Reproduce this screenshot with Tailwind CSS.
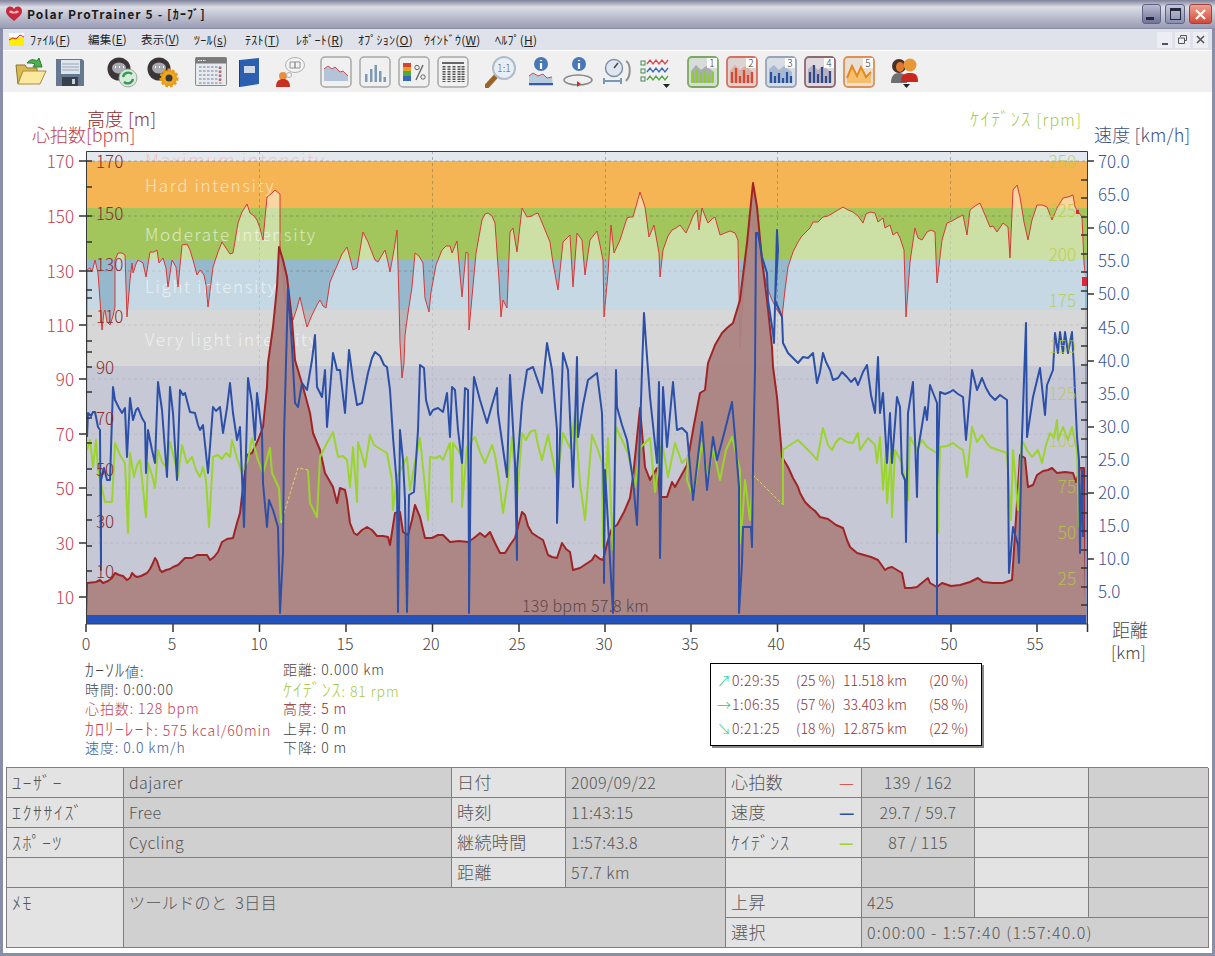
<!DOCTYPE html>
<html lang="ja"><head><meta charset="utf-8"><title>Polar ProTrainer 5</title>
<script src="https://cdn.jsdelivr.net/npm/@tailwindcss/browser@4"></script></head>
<body class="m-0 bg-white">
<div class="w-[1215px] h-[956px] flex flex-col overflow-hidden font-['Noto_Sans_CJK_JP','Noto_Sans',sans-serif] font-light bg-white">
<!-- title bar -->
<div class="h-[29px] shrink-0 flex items-center bg-gradient-to-b from-[#7f8299] via-[#dcdde6] via-25% to-[#9a9cb4] border-b border-[#8a8da6] pl-[6px] pr-[3px]">
<svg class="w-[16px] h-[16px]" viewBox="0 0 16 16"><path d="M8 15C2 10 0 8 0 5c0-5 6-6 8-2 2-4 8-3 8 2 0 3-2 5-8 10z" fill="#c8283c"/><path d="M3 6c1-2 3-2 5 0 2-2 4-2 5 0-2 2-8 2-10 0z" fill="#f8b0b8"/></svg>
<span class="ml-[5px] text-[12px] font-bold text-[#1a1a1a] tracking-[1.15px] leading-none">Polar ProTrainer 5 - [ｶｰﾌﾞ]</span>
<div class="ml-auto flex gap-[4px]">
<div class="w-[19px] h-[20px] rounded-[3px] border border-[#5f6386] bg-gradient-to-b from-[#b9bcd0] to-[#6f7396] flex items-end p-[3px]"><div class="w-[8px] h-[3px] bg-[#26283c]"></div></div>
<div class="w-[20px] h-[20px] rounded-[3px] border border-[#5f6386] bg-gradient-to-b from-[#c5c8da] to-[#8a8eae] flex items-center justify-center"><div class="w-[11px] h-[12px] border border-[#26283c] border-t-[3px]"></div></div>
<div class="w-[23px] h-[20px] rounded-[3px] border border-[#a04040] bg-gradient-to-b from-[#f0a090] to-[#d04838] flex items-center justify-center"><svg class="w-[13px] h-[13px]" viewBox="0 0 13 13"><path d="M2 2l9 9M11 2l-9 9" stroke="#fff" stroke-width="2.2"/></svg></div>
</div></div>
<div class="flex-1 flex flex-col border-x-[3px] border-b-[3px] border-[#8a8ea8] min-h-0">
<!-- menu -->
<div class="h-[22px] shrink-0 flex items-center bg-[#dfe2ea] border-b border-white text-[12px] tracking-[.25px] font-normal text-[#222] pl-[6px]">
<svg class="w-[15px] h-[13px] mr-[6px]" viewBox="0 0 15 13"><rect width="15" height="13" fill="#fff"/><rect y="4" width="15" height="9" fill="#ffee00"/><path d="M0 7l4-2 3 1 4-4 4 2" stroke="#d03020" fill="none"/></svg>
<span class="w-[58px]">ﾌｧｲﾙ(<u>F</u>)</span><span class="w-[53px] text-[11.5px]">編集(<u>E</u>)</span><span class="w-[53px] text-[11.5px]">表示(<u>V</u>)</span><span class="w-[51px]">ﾂｰﾙ(<u>s</u>)</span><span class="w-[51px]">ﾃｽﾄ(<u>T</u>)</span><span class="w-[62px]">ﾚﾎﾟｰﾄ(<u>R</u>)</span><span class="w-[66px]">ｵﾌﾟｼｮﾝ(<u>O</u>)</span><span class="w-[71px]">ｳｲﾝﾄﾞｳ(<u>W</u>)</span><span>ﾍﾙﾌﾟ(<u>H</u>)</span>
<div class="ml-auto mr-[4px] flex gap-[3px] text-[#555]">
<div class="w-[15px] h-[16px] bg-[#eceef3] flex items-end justify-center pb-[3px]"><div class="w-[6px] h-[2px] bg-[#555]"></div></div>
<div class="w-[15px] h-[16px] bg-[#eceef3] flex items-center justify-center"><svg class="w-[9px] h-[9px]" viewBox="0 0 9 9"><path d="M2.5 2V.5h6v5H7M.5 3h6v5.5h-6z" stroke="#555" fill="none"/></svg></div>
<div class="w-[15px] h-[16px] bg-[#eceef3] flex items-center justify-center"><svg class="w-[9px] h-[9px]" viewBox="0 0 9 9"><path d="M1 1l7 7M8 1l-7 7" stroke="#555" stroke-width="1.6"/></svg></div>
</div></div>
<!-- toolbar -->
<div class="h-[41px] shrink-0 flex items-center bg-[#f0f0f0] pl-[12px]">
<svg class="w-8 h-8" viewBox="0 0 32 32"><path d="M3 28L1 9h9l2 3h10v4H8z" fill="#d8b850" stroke="#8a7430"/><path d="M3 28l5-13h23l-6 13z" fill="#fbe9a0" stroke="#a88c40"/><path d="M12 7c3-4 7-4 10-2l2-3 3 9-9 0 2-3c-2-1-5-1-8-1z" fill="#4caf50" stroke="#2e7d32"/></svg>
<svg class="w-8 h-8 ml-[7px]" viewBox="0 0 32 32"><path d="M2 3h26l2 2v25H2z" fill="#66788f"/><rect x="7" y="4" width="19" height="14" fill="#dfe5ec"/><path d="M8 8h17M8 11h17M8 14h17" stroke="#9aa8b8"/><rect x="8" y="21" width="16" height="9" fill="#39404d"/><rect x="18" y="23" width="3" height="5" fill="#c9d0da"/></svg>
<svg class="w-8 h-8 ml-[20px]" viewBox="0 0 32 32"><circle cx="13" cy="13" r="11.5" fill="#3c3538"/><ellipse cx="13" cy="12" rx="7" ry="5.5" fill="#a8aab2"/><path d="M9 11h1M13 11h1M17 11h1" stroke="#fff" stroke-width="2"/><circle cx="22" cy="22" r="9" fill="#d8ead8" stroke="#a0a8a0"/><path d="M17 21a5.500 5.500 0 0 1 9-3M27 23a5.500 5.500 0 0 1-9 3" stroke="#2e9a58" stroke-width="2.400" fill="none"/></svg>
<svg class="w-8 h-8 ml-[9px]" viewBox="0 0 32 32"><circle cx="12" cy="13" r="11.500" fill="#3c3538"/><ellipse cx="12" cy="12" rx="7" ry="5.500" fill="#a8aab2"/><path d="M8 11h1M12 11h1M16 11h1" stroke="#fff" stroke-width="2"/><circle cx="22" cy="22" r="8" fill="#e89a18" stroke="#e89a18" stroke-width="3" stroke-dasharray="2.500 2"/><circle cx="22" cy="22" r="6.500" fill="#f0a820"/><circle cx="22" cy="22" r="3.500" fill="#3a3a3a"/></svg>
<svg class="w-8 h-8 ml-[16px]" viewBox="0 0 32 32"><rect x="0.500" y="1.500" width="31" height="28" rx="1" fill="#e8eaee" stroke="#8a8a8a"/><rect x="0.500" y="1.500" width="31" height="6" fill="#7a7a7a"/><path d="M3 4.500h8" stroke="#fff" stroke-dasharray="1.500 1"/><path d="M4 11h24M4 15h24M4 19h24M4 23h24M4 27h24" stroke="#a8b4c8" stroke-width="2" stroke-dasharray="2.500 1.500"/><path d="M25 11v16" stroke="#d06060" stroke-width="2.500" stroke-dasharray="2 2"/></svg>
<svg class="w-8 h-8 ml-[7px]" viewBox="0 0 32 32"><path d="M6 4l19-2v26L6 31z" fill="#2d5fb0"/><path d="M6 4h-1v27h1z" fill="#1c3f80"/><rect x="10" y="10" width="11" height="7" fill="#cdd8e8"/></svg>
<svg class="w-8 h-8 ml-[8px]" viewBox="0 0 32 32"><circle cx="9" cy="20" r="4" fill="#e89040"/><path d="M2 31c0-6 3-8 7-8s7 2 7 8z" fill="#c83020"/><ellipse cx="21" cy="9" rx="9.500" ry="7.500" fill="#f4f4f4" stroke="#b0b0b0"/><circle cx="15" cy="19" r="2.500" fill="#f4f4f4" stroke="#b0b0b0"/><path d="M16 6h5v6h-5zM21 6h5v6h-5z" fill="none" stroke="#909090"/></svg>
<svg class="w-8 h-8 ml-[14px]" viewBox="0 0 32 32"><rect x="1" y="1" width="30" height="30" rx="4" fill="#f0f0f0" stroke="#a8a8a8" stroke-width="1.500"/><path d="M4 25V13l4-3 4 3 3-2 5 5 3-1 5 5v5z" fill="#b4c4d8"/><path d="M4 13l4-3 4 3 3-2 5 5 3-1 5 5" stroke="#d84850" fill="none"/></svg>
<svg class="w-8 h-8 ml-[7px]" viewBox="0 0 32 32"><rect x="1" y="1" width="30" height="30" rx="4" fill="#f0f0f0" stroke="#a8a8a8" stroke-width="1.500"/><path d="M6 26V18h2.500v8zM11 26V13h2.500v13zM15.500 26V9h2.500v17zM20 26V15h2.500v11zM24.500 26V21h2.500v5z" fill="#7c9ab4"/></svg>
<svg class="w-8 h-8 ml-[7px]" viewBox="0 0 32 32"><rect x="1" y="1" width="30" height="30" rx="4" fill="#f0f0f0" stroke="#a8a8a8" stroke-width="1.500"/><rect x="5" y="7" width="8" height="4" fill="#d84030"/><rect x="5" y="11" width="8" height="4" fill="#e8a020"/><rect x="5" y="15" width="8" height="5" fill="#50a840"/><rect x="5" y="20" width="8" height="5" fill="#3868b8"/><path d="M25 9l-7 15" stroke="#666" stroke-width="1.400"/><circle cx="19" cy="11.500" r="2.200" fill="none" stroke="#666"/><circle cx="25" cy="21" r="2.200" fill="none" stroke="#666"/></svg>
<svg class="w-8 h-8 ml-[7px]" viewBox="0 0 32 32"><rect x="1" y="1" width="30" height="30" rx="4" fill="#f0f0f0" stroke="#a8a8a8" stroke-width="1.500"/><path d="M5 7h22" stroke="#666" stroke-width="2"/><path d="M7 10v16M12 10v16M17 10v16M22 10v16M26 10v16" stroke="#555" stroke-width="3" stroke-dasharray="1.500 1"/></svg>
<svg class="w-8 h-8 ml-[16px]" viewBox="0 0 32 32"><path d="M2 30l10-11" stroke="#9a6428" stroke-width="5" stroke-linecap="round"/><circle cx="19" cy="12" r="11" fill="#e8eef6" stroke="#b0bcc8" stroke-width="2"/><text x="19" y="16" text-anchor="middle" class="text-[10.500px] fill-[#666]">1:1</text></svg>
<svg class="w-8 h-8 ml-[7px]" viewBox="0 0 32 32"><circle cx="17" cy="8" r="7" fill="#4878b8"/><path d="M17 4v1M17 7v6" stroke="#fff" stroke-width="2.200"/><path d="M5 30V20l4-3 5 3 5-2 4 4 5-1 1 9z" fill="#b8cce0"/><path d="M5 20l4-3 5 3 5-2 4 4 5-1" stroke="#d84850" fill="none"/><rect x="5" y="27" width="24" height="2" fill="#3858a8"/></svg>
<svg class="w-8 h-8 ml-[6px]" viewBox="0 0 32 32"><circle cx="17" cy="8" r="7" fill="#4878b8"/><path d="M17 4v1M17 7v6" stroke="#fff" stroke-width="2.200"/><ellipse cx="16" cy="24" rx="14" ry="5" fill="none" stroke="#888" stroke-width="1.500"/><path d="M15 25v6l4-3z" fill="#c83020"/></svg>
<svg class="w-8 h-8 ml-[7px]" viewBox="0 0 32 32"><circle cx="13" cy="12" r="8.500" fill="#dfe6f0" stroke="#8090a8" stroke-width="1.500"/><path d="M13 12l4-5" stroke="#445" stroke-width="1.500"/><path d="M3 25h17M3 22v6M20 22v6" stroke="#7898b8" stroke-width="2"/><path d="M25 5c5 3 5 15 0 20" stroke="#909090" stroke-width="2" fill="none"/></svg>
<svg class="w-8 h-8 ml-[7px]" viewBox="0 0 32 32"><rect x="1" y="5" width="4" height="4" fill="none" stroke="#4a8a50"/><rect x="1" y="13" width="4" height="4" fill="none" stroke="#4a8a50"/><rect x="1" y="21" width="4" height="4" fill="none" stroke="#4a8a50"/><path d="M7 8l3-4 3 4 3-4 3 4 3-4 3 4 3-4" stroke="#d84850" fill="none" stroke-width="1.300"/><path d="M7 16l3-4 3 4 3-4 3 4 3-4 3 4 3-4" stroke="#3868b8" fill="none" stroke-width="1.300"/><path d="M7 24l3-4 3 4 3-4 3 4 3-4 3 4 3-4" stroke="#50a840" fill="none" stroke-width="1.300"/><path d="M23 28h7l-3.500 4z" fill="#222"/></svg>
<svg class="w-8 h-8 ml-[15px]" viewBox="0 0 32 32"><rect x="1" y="1" width="30" height="30" rx="4" fill="#d8dcd8" stroke="#7aaa60" stroke-width="1.800"/><path d="M4 27V15l5-6 5 5 5-4 8 6v11z" fill="#a8aeb0"/><path d="M6 27V16M10 27V14M14 27V17M18 27V15M22 27V18M26 27V16" stroke="#8ad028" stroke-width="2"/><rect x="20" y="2" width="10" height="10" fill="#fff"/><text x="25" y="11" text-anchor="middle" class="text-[10px] fill-[#333]">1</text></svg>
<svg class="w-8 h-8 ml-[7px]" viewBox="0 0 32 32"><rect x="1" y="1" width="30" height="30" rx="4" fill="#dcd4d0" stroke="#d87060" stroke-width="1.800"/><path d="M4 27V15l5-6 5 5 5-4 8 6v11z" fill="#d8b0a8"/><path d="M6 27V16M10 27V12M14 27V20M18 27V14M22 27V19M26 27V16" stroke="#d84830" stroke-width="2.200"/><rect x="20" y="2" width="10" height="10" fill="#fff"/><text x="25" y="11" text-anchor="middle" class="text-[10px] fill-[#333]">2</text></svg>
<svg class="w-8 h-8 ml-[7px]" viewBox="0 0 32 32"><rect x="1" y="1" width="30" height="30" rx="4" fill="#d8dce4" stroke="#98a4b8" stroke-width="1.800"/><path d="M4 27V13l5-4 5 5 5-4 8 6v11z" fill="#a8b8d0"/><path d="M6 27V16M10 27V20M14 27V17M18 27V22M22 27V16M26 27V20" stroke="#2850a0" stroke-width="2.200"/><rect x="20" y="2" width="10" height="10" fill="#fff"/><text x="25" y="11" text-anchor="middle" class="text-[10px] fill-[#333]">3</text></svg>
<svg class="w-8 h-8 ml-[7px]" viewBox="0 0 32 32"><rect x="1" y="1" width="30" height="30" rx="4" fill="#dcd8dc" stroke="#906870" stroke-width="1.800"/><path d="M4 27V13l5-4 5 5 5-4 8 6v11z" fill="#b8b0c0"/><path d="M6 27V16M10 27V9M14 27V18M18 27V11M22 27V20M26 27V15" stroke="#304a88" stroke-width="2.200"/><rect x="20" y="2" width="10" height="10" fill="#fff"/><text x="25" y="11" text-anchor="middle" class="text-[10px] fill-[#333]">4</text></svg>
<svg class="w-8 h-8 ml-[7px]" viewBox="0 0 32 32"><rect x="1" y="1" width="30" height="30" rx="4" fill="#e8e0d8" stroke="#e09050" stroke-width="1.800"/><path d="M4 27V22L9 10l5 10 4-9 5 10 5-5v11z" fill="#f4c070"/><path d="M4 22L9 10l5 10 4-9 5 10 5-5" stroke="#e88818" fill="none" stroke-width="2"/><rect x="20" y="2" width="10" height="10" fill="#fff"/><text x="25" y="11" text-anchor="middle" class="text-[10px] fill-[#333]">5</text></svg>
<svg class="w-8 h-8 ml-[14px]" viewBox="0 0 32 32"><circle cx="10" cy="10" r="7" fill="#4a3028"/><ellipse cx="11" cy="11" rx="4" ry="5" fill="#e07830"/><path d="M2 27c0-7 3-10 8-10s8 3 8 10z" fill="#707070"/><circle cx="21" cy="9" r="6.500" fill="#e89838"/><path d="M12 26c0-7 3-9 9-9s8 2 8 9z" fill="#c82820"/><path d="M14 28h7l-3.500 4z" fill="#222"/></svg>
</div>
<!-- chart: a free canvas whose coordinates are window pixels -->
<svg class="block w-[1209px] h-[568px] shrink-0 overflow-visible" viewBox="3 92 1209 568">
<defs><clipPath id="plot"><rect x="87" y="151" width="998" height="465"/></clipPath></defs>
<rect x="86" y="151" width="1002" height="10" fill="#e3e8ee"/>
<text x="145" y="167" class="text-[18px] fill-[#f4c4c4] tracking-[1.6px]">Maximum intensity</text>
<rect x="86" y="161" width="1002" height="47" fill="#f5b554"/>
<rect x="86" y="208" width="1002" height="51" fill="#a2c65c"/>
<rect x="86" y="259" width="1002" height="51" fill="#95b8cd"/>
<rect x="86" y="310" width="1002" height="56" fill="#b6b6b9"/>
<rect x="86" y="366" width="1002" height="258" fill="#979bb4"/>
<g class="text-[17px] fill-white tracking-[1.650px]" opacity=".62"><text x="145" y="192">Hard intensity</text><text x="145" y="241">Moderate intensity</text><text x="145" y="293">Light intensity</text><text x="145" y="346">Very light intensity</text></g>
<g stroke="#666" stroke-dasharray="3 3" opacity=".45" fill="none"><path d="M259.500 151V615M432.500 151V615M605.500 151V615M777.500 151V615M950.500 151V615M86 161H1088M86 216H1088M86 271H1088M86 325H1088M86 379H1088M86 434H1088M86 488H1088M86 543H1088"/></g>
<g clip-path="url(#plot)">
<polyline fill="#ffffff" fill-opacity=".45" stroke="#d63838" stroke-width="1" stroke-linejoin="round" points="86,624 87,270 90,268 92,272 95,260 98,273 100,300 102,330 104,312 105,310 107,322 110,325 113,316 115,307 115,260 118,253 122,253 125,255 127,317 130,280 132,263 133,273 136,264 138,260 143,263 146,277 150,252 154,252 157,250 159,263 163,258 166,268 168,287 172,260 176,267 178,287 182,245 187,244 190,250 193,260 197,275 200,270 204,275 206,285 208,307 213,267 218,252 222,242 226,248 230,254 233,253 238,223 242,212 247,204 250,213 254,216 257,220 260,228 263,240 267,197 271,194 275,190 280,194 280,247 285,300 293,320 297,308 300,297 304,315 307,327 312,315 317,305 320,300 323,306 326,308 330,282 336,268 342,254 347,247 350,258 353,270 357,268 363,232 368,242 373,255 375,260 378,262 382,255 385,250 388,262 390,272 394,250 397,230 399,300 400,343 402,378 404,363 405,335 408,313 412,287 415,253 419,256 423,263 425,298 429,312 431,292 436,265 442,250 446,246 450,246 452,253 457,241 462,297 466,252 468,253 469,330 476,253 482,220 485,214 488,213 492,216 495,223 499,280 501,317 503,300 505,304 507,308 510,232 513,228 517,252 522,208 527,217 532,216 535,214 538,213 543,225 550,242 553,263 558,290 563,242 570,235 573,287 577,233 582,240 585,275 590,240 597,231 600,245 603,260 604,317 608,273 611,225 614,253 620,240 627,218 630,217 633,217 640,192 645,207 649,237 654,225 659,253 660,277 663,250 668,236 672,230 676,228 680,225 686,233 690,224 693,216 697,210 699,230 702,208 705,216 708,223 712,219 715,217 720,235 725,233 730,231 735,233 738,240 740,347 744,280 750,225 753,225 760,258 767,287 772,300 777,310 782,317 785,290 788,267 793,252 798,242 802,236 806,232 810,228 813,222 818,222 823,217 828,216 833,213 838,210 843,207 848,210 853,212 858,216 863,223 866,214 870,212 875,213 878,222 883,218 885,228 890,225 893,235 897,232 900,238 904,250 906,317 910,262 915,228 918,238 922,240 927,232 931,230 935,232 937,283 942,240 947,223 952,221 957,218 963,215 967,235 970,210 975,206 980,203 985,215 990,227 993,226 997,232 1003,223 1008,227 1010,258 1013,190 1017,185 1020,197 1024,222 1028,240 1032,220 1037,205 1042,205 1047,207 1052,220 1057,208 1063,198 1068,197 1073,195 1075,207 1082,217 1084,263 1086,280 1086,624"/>
<polyline fill="#ab8280" fill-opacity=".93" stroke="#a02424" stroke-width="2" stroke-linejoin="round" points="86,615 87,583 96,582 100,580 103,583 108,581 112,578 115,573 119,575 123,576 127,580 130,578 132,573 135,576 137,577 141,576 147,573 150,569 153,563 155,558 157,561 160,570 162,572 166,570 170,569 173,567 178,565 182,561 185,558 192,558 197,555 207,555 210,560 214,557 218,552 222,542 227,539 233,538 237,523 240,513 243,487 247,455 252,453 258,440 263,427 267,387 268,363 273,327 277,287 279,247 283,260 287,277 292,320 295,360 303,387 310,413 313,433 320,450 325,473 333,487 337,503 340,488 345,490 347,500 350,523 354,533 357,535 362,530 367,527 372,530 377,536 383,536 388,537 390,545 395,513 400,512 403,532 408,535 412,520 415,505 420,517 425,538 432,538 438,535 443,535 450,542 459,541 468,542 474,538 480,533 485,537 490,532 495,543 500,553 505,553 510,545 515,538 522,512 525,515 528,526 532,533 538,537 543,540 548,555 552,557 557,558 562,543 566,549 570,552 573,570 580,568 586,564 592,560 595,555 600,559 603,560 608,540 612,528 617,525 624,512 630,498 633,477 640,408 645,467 650,480 657,468 660,497 667,497 672,482 675,487 681,476 687,465 693,430 700,393 705,390 708,363 715,345 722,333 727,328 733,323 740,300 747,243 753,183 757,207 762,260 767,300 772,347 773,367 777,397 782,457 788,467 793,478 798,487 800,493 805,502 810,507 815,511 820,517 828,519 836,525 843,528 847,540 850,547 857,553 864,555 871,557 878,560 885,570 888,568 892,567 897,570 902,573 905,588 911,588 917,587 923,582 928,578 930,583 937,587 942,583 951,586 960,585 970,582 978,578 983,582 993,583 1003,583 1012,580 1017,503 1020,455 1025,458 1028,487 1033,485 1037,475 1043,471 1048,470 1052,468 1057,473 1065,472 1073,473 1076,482 1080,468 1084,468 1086,603 1086,615"/>
<polyline fill="none" stroke="#9bd42d" stroke-width="2" stroke-linejoin="round" points="87,450 90,440 93,467 96,440 98,470 103,493 105,502 112,502 115,443 120,455 125,463 128,533 130,453 134,477 137,465 140,460 146,517 148,463 152,475 155,488 158,450 162,462 167,468 170,442 175,462 178,477 182,445 187,463 192,457 196,470 200,477 203,467 206,480 209,527 213,457 218,455 222,459 226,453 230,457 232,440 237,458 242,473 248,460 252,438 258,460 263,473 270,448 272,473 279,488 281,523"/>
<path d="M281,523 298,468 308,470M753,475 783,505" fill="none" stroke="#d8d870" stroke-width="1" stroke-dasharray="3 2"/>
<polyline fill="none" stroke="#9bd42d" stroke-width="2" stroke-linejoin="round" points="308,470 310,503 317,517 320,457 327,443 333,432 338,457 343,456 347,460 350,487 353,447 357,502 358,442 362,455 365,467 370,435 374,445 377,447 382,450 387,453 392,480 393,510 397,477 407,457 410,490 415,462 420,438 425,487 428,520 430,457 436,458 440,456 443,460 447,450 450,443 452,502 453,443 458,450 462,458 462,507 467,447 475,437 480,452 485,463 492,445 495,455 499,480 503,513 508,480 512,437 517,500 522,433 526,440 530,432 535,430 538,445 542,460 548,435 552,455 557,480 563,433 570,448 575,413 580,483 585,520 592,435 598,450 602,463 603,547 608,438 613,550 616,427 622,440 628,453 635,487 640,448 650,438 655,492 662,442 668,477 675,443 682,463 688,457 687,480 693,497 702,443 708,480 713,447 720,480 726,450 732,437 740,470 740,543 743,510 745,480 750,520 753,477"/>
<polyline fill="none" stroke="#9bd42d" stroke-width="2" stroke-linejoin="round" points="783,505 783,450 790,445 798,440 803,445 808,450 813,455 817,460 823,428 828,445 832,450 836,442 840,438 847,442 853,443 858,433 860,450 868,438 875,445 877,463 880,437 883,490 886,450 887,503 891,453 892,517 895,450 902,463 905,480 908,500 910,437 917,450 922,440 927,447 932,450 937,453 938,533 940,447 947,446 953,443 958,447 963,450 967,477 972,427 977,442 982,435 986,442 990,447 998,450 1007,453 1011,520 1013,450 1018,510 1022,440 1027,450 1032,457 1038,450 1042,463 1046,445 1050,433 1054,438 1057,420 1058,440 1063,427 1068,440 1072,427 1077,450 1079,527"/>
<polyline fill="none" stroke="#2c50a8" stroke-width="2" stroke-linejoin="round" points="87,437 88,413 91,416 93,412 95,412 98,427 100,430 101,570 101,480 104,468 107,480 110,480 113,387 115,400 119,408 122,413 125,408 127,457 130,398 133,420 136,410 138,408 142,418 145,423 146,473 148,430 152,450 155,463 158,382 162,410 165,450 167,477 170,387 173,413 177,480 180,390 183,395 185,393 190,412 195,413 198,425 200,430 203,425 208,473 213,407 216,411 220,407 223,433 227,408 230,383 233,413 237,440 240,427 244,527 248,378 252,403 255,440 257,393 262,433 263,483 267,527 269,500 273,510 278,527 280,613 283,553 284,437 288,288 292,347 295,403 298,407 302,383 307,390 312,360 315,335 317,387 322,397 325,370 327,427 333,353 337,370 340,370 345,413 349,350 353,380 357,405 362,403 368,373 372,358 375,352 380,356 384,365 387,367 390,390 393,437 397,487 398,612 400,430 403,460 405,500 407,612 409,495 414,492 418,430 420,365 424,368 426,400 430,415 433,410 438,408 443,412 447,393 450,437 452,387 455,390 458,430 462,463 465,388 468,390 469,570 469,613 471,447 474,377 480,400 487,423 492,405 497,388 498,413 507,477 510,375 515,463 517,560 517,470 522,403 527,370 533,367 542,393 547,343 552,370 557,430 557,523 563,353 568,370 573,487 577,357 578,437 583,405 588,380 597,373 602,413 604,503 604,583 605,470 613,613 616,370 617,407 622,425 627,440 633,480 637,525 642,370 644,313 646,343 650,397 657,463 659,382 660,558 663,387 667,447 673,382 677,430 682,428 687,433 693,500 702,422 707,490 713,437 717,460 725,430 732,402 735,437 739,487 739,613 742,563 743,527 747,527 751,527 752,547 753,467 755,370 756,233 758,233 762,257 767,273 768,300 773,333 774,343 777,230 778,250 775,300 782,317 783,343 788,353 793,358 798,363 803,357 808,358 813,353 815,368 817,383 820,372 823,353 826,362 830,370 833,380 838,378 842,372 847,377 851,382 855,378 858,385 863,372 867,365 871,395 875,413 878,357 880,413 883,393 887,463 890,413 892,463 897,397 900,407 902,473 905,480 906,542 908,413 913,382 917,497 918,450 925,407 927,420 930,385 937,403 937,615 937,487 940,392 945,394 950,392 953,390 958,394 963,397 966,440 972,370 977,390 982,378 986,388 990,395 995,400 1000,395 1007,400 1008,470 1009,573 1013,527 1018,545 1019,563 1022,437 1026,323 1027,437 1033,397 1040,368 1045,415 1047,385 1053,370 1055,333 1058,353 1060,332 1063,353 1065,332 1068,353 1072,332 1074,370 1077,437 1079,460 1080,553 1082,470 1083,537"/>
</g>
<rect x="1085" y="470" width="3" height="145" fill="#8494c4"/>
<rect x="1082" y="277" width="5" height="9" fill="#d8283c"/><rect x="1076" y="210" width="3" height="4" fill="#d8283c"/>
<rect x="86" y="615" width="1000" height="9" fill="#2352bd"/>
<!-- inner axis numbers -->
<g class="text-[17px] fill-[#8b2b2b]"><text x="96" y="168">170</text><text x="96" y="220">150</text><text x="96" y="271">130</text><text x="96" y="323">110</text><text x="96" y="374">90</text><text x="96" y="425">70</text><text x="96" y="476">50</text><text x="96" y="528">30</text><text x="96" y="578">10</text></g>
<g class="text-[17px] fill-[#b8cc40]" text-anchor="end" opacity=".8"><text x="1076" y="168">250</text><text x="1076" y="217">225</text><text x="1076" y="261">200</text><text x="1076" y="307">175</text><text x="1076" y="353">150</text><text x="1076" y="400">125</text><text x="1076" y="447">100</text><text x="1076" y="493">75</text><text x="1076" y="539">50</text><text x="1076" y="585">25</text></g>
<text x="522" y="612" class="text-[16px] fill-[#55464a] tracking-[.3px]">139 bpm 57.8 km</text>
<!-- frame and ticks -->
<path d="M86.500 624V151.500H1087.500V624M86 624H1088" fill="none" stroke="#3a3a3a"/>
<path d="M79 161H86M79 216H86M79 271H86M79 325H86M79 379H86M79 434H86M79 488H86M79 543H86M79 597H86" stroke="#333" stroke-width="1.500"/>
<path d="M86 161H92M86 187H92M86 216H92M86 242H92M86 271H92M86 290H92M86 298H92M86 316H92M86 341H92M86 352H92M86 367H92M86 392H92M86 418H92M86 443H92M86 469H92M86 495H92M86 520H92M86 546H92M86 571H92" stroke="#333" stroke-width="1.500"/>
<path d="M1088 161H1094M1088 228H1094M1088 294H1094M1088 361H1094M1088 427H1094M1088 493H1094M1088 559H1094" stroke="#333" stroke-width="1.500"/>
<path d="M1081 180H1088M1081 198H1088M1081 217H1088M1081 235H1088M1081 254H1088M1081 272H1088M1081 291H1088M1081 309H1088M1081 328H1088M1081 346H1088M1081 365H1088M1081 383H1088M1081 402H1088M1081 420H1088M1081 439H1088M1081 457H1088M1081 476H1088M1081 494H1088M1081 513H1088M1081 531H1088M1081 550H1088M1081 568H1088M1081 587H1088M1081 605H1088" stroke="#333" stroke-width="1.500"/>
<path d="M86 624V632M173 624V632M259.500 624V632M346 624V632M432.500 624V632M519 624V632M605 624V632M691 624V632M777.500 624V632M864 624V632M951 624V632M1037 624V632M1087.500 624V632" stroke="#333" stroke-width="1.500"/>
<!-- outer labels -->
<g class="text-[17px] fill-[#c4404e]" text-anchor="end"><text x="74" y="168">170</text><text x="74" y="223">150</text><text x="74" y="278">130</text><text x="74" y="332">110</text><text x="74" y="386">90</text><text x="74" y="441">70</text><text x="74" y="495">50</text><text x="74" y="550">30</text><text x="74" y="604">10</text></g>
<g class="text-[17px] fill-[#3c5590]"><text x="1098" y="168">70.0</text><text x="1098" y="201">65.0</text><text x="1098" y="234">60.0</text><text x="1098" y="267">55.0</text><text x="1098" y="300">50.0</text><text x="1098" y="334">45.0</text><text x="1098" y="367">40.0</text><text x="1098" y="400">35.0</text><text x="1098" y="433">30.0</text><text x="1098" y="466">25.0</text><text x="1098" y="499">20.0</text><text x="1098" y="532">15.0</text><text x="1098" y="565">10.0</text><text x="1098" y="598">5.0</text></g>
<g class="text-[16px] fill-[#444]" text-anchor="middle"><text x="86" y="650">0</text><text x="172" y="650">5</text><text x="259" y="650">10</text><text x="345" y="650">15</text><text x="431" y="650">20</text><text x="517" y="650">25</text><text x="604" y="650">30</text><text x="690" y="650">35</text><text x="776" y="650">40</text><text x="862" y="650">45</text><text x="949" y="650">50</text><text x="1035" y="650">55</text></g>
<text x="87" y="126" class="text-[18px] fill-[#8b2b2b] tracking-[.3px]">高度 [m]</text>
<text x="32" y="142" class="text-[18px] fill-[#c4404e]">心拍数[bpm]</text>
<text x="970" y="126" class="text-[16px] fill-[#a8c84a] tracking-[1.2px]"><tspan class="text-[18.500px]">ｹｲﾃﾞﾝｽ</tspan> [rpm]</text>
<text x="1094" y="142" class="text-[18px] fill-[#3a5080] tracking-[.2px]">速度 [km/h]</text>
<text x="1112" y="637" class="text-[18px] fill-[#444]">距離</text>
<text x="1111" y="659" class="text-[17px] fill-[#444]">[km]</text>
</svg>
<!-- info row -->
<div class="h-[107px] shrink-0 flex items-start text-[14px] tracking-[.9px] leading-[19.500px] text-[#444]">
<div class="ml-[82px] w-[198px] whitespace-nowrap [&>div]:h-[19.500px]">
<div><span class="text-[18px] tracking-[1px] leading-[18px]">ｶｰｿﾙ</span>値:</div><div>時間: 0:00:00</div><div class="text-[#c4404e]">心拍数: 128 bpm</div><div class="text-[#c4404e] whitespace-nowrap"><span class="text-[18px] tracking-[.9px] leading-[18px]">ｶﾛﾘｰﾚｰﾄ</span>: 575 kcal/60min</div><div class="text-[#3a5a98]">速度: 0.0 km/h</div>
</div>
<div class="w-[427px] whitespace-nowrap [&>div]:h-[19.500px]">
<div>距離: 0.000 km</div><div class="text-[#a8c84a]"><span class="text-[18px] tracking-[.9px] leading-[18px]">ｹｲﾃﾞﾝｽ</span>: 81 rpm</div><div class="text-[#8b2b2b]">高度: 5 m</div><div>上昇: 0 m</div><div>下降: 0 m</div>
</div>
<div class="mt-[3px] w-[272px] h-[83px] border border-black bg-white shadow-[2px_2px_0_#888] text-[14px] tracking-normal leading-[24px] text-[#8a3434] pt-[4px] pl-[6px]">
<div class="flex"><span class="w-[15px] text-[#22c88c]">↗</span><span class="w-[64px] tracking-[.5px]">0:29:35</span><span class="w-[47px]">(25 %)</span><span class="w-[86px]">11.518 km</span><span>(20 %)</span></div>
<div class="flex"><span class="w-[15px] text-[#22c88c]">→</span><span class="w-[64px] tracking-[.5px]">1:06:35</span><span class="w-[47px]">(57 %)</span><span class="w-[86px]">33.403 km</span><span>(58 %)</span></div>
<div class="flex"><span class="w-[15px] text-[#22c88c]">↘</span><span class="w-[64px] tracking-[.5px]">0:21:25</span><span class="w-[47px]">(18 %)</span><span class="w-[86px]">12.875 km</span><span>(22 %)</span></div>
</div>
</div>
<!-- table -->
<div class="ml-[3px] w-[1202px] grid grid-cols-[117px_328px_114px_160px_136px_113px_114px_120px] grid-rows-[repeat(6,30px)] border-t border-l border-[#7f7f7f] text-[#555] text-[16px] tracking-[.4px] leading-[28px] [&>div]:border-r [&>div]:border-b [&>div]:border-[#7f7f7f] [&>div]:px-[5px] [&>div]:whitespace-nowrap">
<div class="bg-[#e3e3e3] text-[18px] tracking-[1.500px]">ﾕｰｻﾞｰ</div><div class="bg-[#d0d0d0]">dajarer</div><div class="bg-[#e3e3e3] text-[17px]">日付</div><div class="bg-[#d0d0d0]">2009/09/22</div><div class="bg-[#e3e3e3] text-[17px] flex"><span class="w-[108px]">心拍数</span><span class="text-[#d63838]">—</span></div><div class="bg-[#d0d0d0] text-center">139 / 162</div><div class="bg-[#e3e3e3]"></div><div class="bg-[#d0d0d0]"></div>
<div class="bg-[#e3e3e3] text-[18px] tracking-[1.500px]">ｴｸｻｻｲｽﾞ</div><div class="bg-[#d0d0d0]">Free</div><div class="bg-[#e3e3e3] text-[17px]">時刻</div><div class="bg-[#d0d0d0]">11:43:15</div><div class="bg-[#e3e3e3] text-[17px] flex"><span class="w-[108px]">速度</span><span class="text-[#2c50a8] font-bold">—</span></div><div class="bg-[#d0d0d0] text-center">29.7 / 59.7</div><div class="bg-[#e3e3e3]"></div><div class="bg-[#d0d0d0]"></div>
<div class="bg-[#e3e3e3] text-[18px] tracking-[1.500px]">ｽﾎﾟｰﾂ</div><div class="bg-[#d0d0d0]">Cycling</div><div class="bg-[#e3e3e3] text-[17px]">継続時間</div><div class="bg-[#d0d0d0]">1:57:43.8</div><div class="bg-[#e3e3e3] flex"><span class="w-[108px] text-[18px] tracking-[1px]">ｹｲﾃﾞﾝｽ</span><span class="text-[#9bd42d] font-bold">—</span></div><div class="bg-[#d0d0d0] text-center">87 / 115</div><div class="bg-[#e3e3e3]"></div><div class="bg-[#d0d0d0]"></div>
<div class="bg-[#e3e3e3]"></div><div class="bg-[#d0d0d0]"></div><div class="bg-[#e3e3e3] text-[17px]">距離</div><div class="bg-[#d0d0d0]">57.7 km</div><div class="bg-[#e3e3e3]"></div><div class="bg-[#d0d0d0]"></div><div class="bg-[#e3e3e3]"></div><div class="bg-[#d0d0d0]"></div>
<div class="bg-[#e3e3e3] row-span-2 text-[18px] tracking-[1.500px]">ﾒﾓ</div><div class="bg-[#d0d0d0] row-span-2 col-span-3">ツールドのと&nbsp;&nbsp;3日目</div><div class="bg-[#e3e3e3] text-[17px]">上昇</div><div class="bg-[#d0d0d0] pl-[29px]">425</div><div class="bg-[#e3e3e3]"></div><div class="bg-[#d0d0d0]"></div>
<div class="bg-[#e3e3e3] text-[17px]">選択</div><div class="bg-[#d0d0d0] col-span-3 tracking-[1.200px]">0:00:00 - 1:57:40 (1:57:40.0)</div>
</div>
</div>
</div>
</body></html>
